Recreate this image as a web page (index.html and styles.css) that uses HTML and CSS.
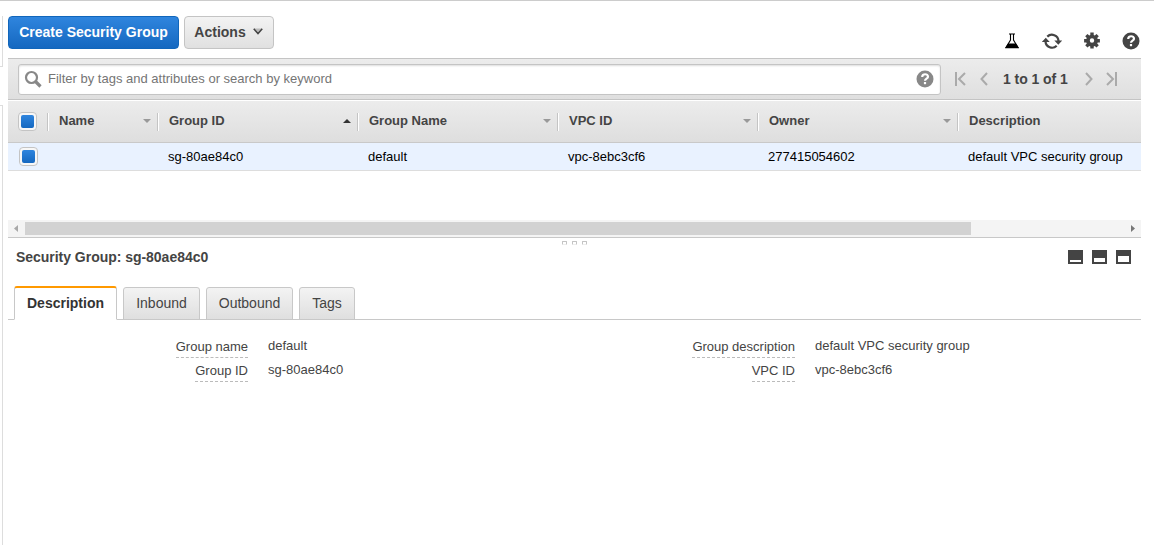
FILE: index.html
```html
<!DOCTYPE html>
<html lang="en">
<head>
<meta charset="utf-8">
<title>Security Groups</title>
<link rel="stylesheet" href="styles.css">
</head>
<body>
<div class="app">
  <aside class="rail"><div class="rail-top"></div><div class="rail-main"></div></aside>
  <main class="content">
    <header class="actions">
      <button class="btn primary">Create Security Group</button>
      <button class="btn menu">Actions
        <svg width="10" height="7" viewBox="0 0 10 7"><path d="M2 .5h6L5 4z" fill="#bbb"/><path d="M.8 .7l4.200 4.800L9.200 .7" fill="none" stroke="#444" stroke-width="1.700"/></svg>
      </button>
      <div class="tools">
        <svg width="16" height="18" viewBox="0 0 16 18"><path d="M5 2h6M6.500 2.500v5.500L2 15.500h12L9.500 8V2.500" fill="none" stroke="#000" stroke-width="1.1"/><path d="M4 11.500h8l3 4.700H1z" fill="#000"/></svg>
        <svg width="20" height="18" viewBox="0 0 20 18"><g fill="none" stroke="#444" stroke-width="2.200"><path d="M5.300 4.600A6.600 6.600 0 0 1 16.500 9"/><path d="M14.700 13.800A6.600 6.600 0 0 1 3.500 9.400"/></g><path d="M12.300 8.500H20.200l-3.900 4.200zM-.2 9.900h7.900L3.800 5.700z" fill="#444"/></svg>
        <svg width="16" height="18" viewBox="0 0 16 18"><path d="M6.300.6h3.400v2.400l1.100.5L12.500 1.900l2.300 2.300-1.600 1.700.5 1.100H15.900v3.400h-2.200l-.5 1.100 1.600 1.700-2.300 2.300-1.700-1.600-1.100.5V16.400H6.300v-2l-1.100-.5-1.700 1.600-2.300-2.300L2.800 11.500l-.5-1.100H.1V7h2.200l.5-1.100L1.200 4.200l2.300-2.300 1.700 1.600 1.100-.5zM8 6.300a2.200 2.200 0 1 0 0 4.400 2.200 2.200 0 0 0 0-4.400z" fill="#444" fill-rule="evenodd"/></svg>
        <svg width="18" height="18" viewBox="0 0 18 18"><circle cx="9" cy="9" r="8.500" fill="#444"/><path d="M6.200 7C6.200 3.200 12 3.500 12 6.700 12 8.800 9 8.600 9 10.800" fill="none" stroke="#fff" stroke-width="2.200"/><path d="M7.900 12h2.200v2.200H7.900z" fill="#fff"/></svg>
      </div>
    </header>
    <div class="filter">
      <div class="search">
        <svg width="18" height="18" viewBox="0 0 18 18"><circle cx="7.500" cy="7.500" r="5.500" fill="none" stroke="#888" stroke-width="2.200"/><path d="M11.500 11.500l5 5" stroke="#888" stroke-width="3.200"/></svg>
        <span>Filter by tags and attributes or search by keyword</span>
        <svg class="help" width="18" height="18" viewBox="0 0 18 18"><circle cx="9" cy="9" r="8.500" fill="#888"/><path d="M6.200 7C6.200 3.200 12 3.500 12 6.700 12 8.800 9 8.600 9 10.800" fill="none" stroke="#fff" stroke-width="2.200"/><path d="M7.900 12h2.200v2.200H7.900z" fill="#fff"/></svg>
      </div>
      <div class="pager">
        <svg width="11" height="14" viewBox="0 0 11 14"><path d="M1 0v14M10 1L4 7l6 6"/></svg>
        <svg class="prev" width="8" height="14" viewBox="0 0 8 14"><path d="M7 1L1.500 7 7 13"/></svg>
        <b>1 to 1 of 1</b>
        <svg class="next" width="8" height="14" viewBox="0 0 8 14"><path d="M1 1l5.500 6L1 13"/></svg>
        <svg class="last" width="11" height="14" viewBox="0 0 11 14"><path d="M10 0v14M1 1l6 6-6 6"/></svg>
      </div>
    </div>
    <div class="row head">
      <div class="pick"><i class="check"></i></div>
      <div class="cell"><span>Name</span><i class="arrow"></i></div>
      <div class="cell"><span>Group ID</span><i class="arrow up"></i></div>
      <div class="cell"><span>Group Name</span><i class="arrow"></i></div>
      <div class="cell"><span>VPC ID</span><i class="arrow"></i></div>
      <div class="cell"><span>Owner</span><i class="arrow"></i></div>
      <div class="cell"><span>Description</span></div>
    </div>
    <div class="row data">
      <div class="pick"><i class="check"></i></div>
      <div class="cell"></div>
      <div class="cell">sg-80ae84c0</div>
      <div class="cell">default</div>
      <div class="cell">vpc-8ebc3cf6</div>
      <div class="cell">277415054602</div>
      <div class="cell">default VPC security group</div>
    </div>
    <div class="scroll">
      <svg width="17" height="17" viewBox="0 0 17 17"><path d="M10 5v7L6 8.500z" fill="#a8a8a8"/></svg>
      <div class="thumb"></div>
      <svg class="right" width="17" height="17" viewBox="0 0 17 17"><path d="M7 5v7l4-3.500z" fill="#777"/></svg>
    </div>
    <div class="grip"><i></i><i></i><i></i></div>
    <div class="detail-head">
      <h2>Security Group: sg-80ae84c0</h2>
      <div class="panes"><i class="low"></i><i class="mid"></i><i class="high"></i></div>
    </div>
    <nav class="tabs">
      <a class="tab active">Description</a><a class="tab inbound">Inbound</a><a class="tab outbound">Outbound</a><a class="tab tags">Tags</a>
    </nav>
    <section class="details">
      <dl>
        <dt><span>Group name</span></dt><dd>default</dd>
        <dt><span>Group ID</span></dt><dd>sg-80ae84c0</dd>
      </dl>
      <dl class="second">
        <dt><span>Group description</span></dt><dd>default VPC security group</dd>
        <dt><span>VPC ID</span></dt><dd>vpc-8ebc3cf6</dd>
      </dl>
    </section>
  </main>
</div>
</body>
</html>
```
FILE: styles.css
```css
* { box-sizing: border-box; }
body { margin: 0; background: #fff; color: #444; font: 13px/16px "Liberation Sans", Arial, sans-serif; overflow: hidden; white-space: nowrap; }
svg { display: block; flex: none; }
.app { height: 545px; border-top: 1px solid #ccc; display: flex; }
.rail { width: 3px; margin-right: 5px; padding-top: 15px; display: flex; flex-direction: column; }
.rail-top { height: 51px; border: solid #ddd; border-width: 0 1px 1px 0; }
.rail-main { flex: 1; margin-top: 38px; border: solid #ddd; border-width: 1px 1px 0 0; }
.content { width: 1133px; display: flex; flex-direction: column; }
.actions { height: 57px; padding-top: 15px; display: flex; align-items: flex-start; gap: 5px; }
.btn { height: 33px; padding: 0 0 1px; border: 1px solid #c4c4c4; border-radius: 4px; font: bold 14px "Liberation Sans", Arial, sans-serif; display: flex; align-items: center; justify-content: center; }
.primary { width: 171px; color: #fff; border-color: #1166bb; background: linear-gradient(#2f85de, #1568c0); }
.menu { width: 90px; gap: 7px; padding-right: 1px; color: #444; background: linear-gradient(#f3f3f3, #e0e0e0); }
.menu svg { margin-top: -1px; }
.tools { margin: 16px 0 0 auto; display: flex; align-items: center; }
.tools svg:nth-child(2) { margin-left: 22px; }
.tools svg:nth-child(3) { margin-left: 22px; }
.tools svg:nth-child(4) { margin: 0 1px 0 22px; }
.filter { height: 42px; border: solid #c4c4c4; border-width: 1px 0; background: linear-gradient(#ececec, #dfdfdf); display: flex; align-items: center; padding-left: 10px; }
.search { width: 923px; height: 31px; border: 1px solid #c4c4c4; border-radius: 3px; background: #fff; box-shadow: inset 0 1px 2px #ddd; display: flex; align-items: center; padding: 0 6px 0 5px; color: #757575; }
.search span { margin-left: 6px; }
.search .help { margin-left: auto; }
.pager { display: flex; align-items: center; margin-left: 14px; }
.pager path { fill: none; stroke: #aaa; stroke-width: 2; }
.prev { margin-left: 14px; }
.pager b { width: 66px; margin-left: 15px; font-size: 14px; letter-spacing: -.05px; }
.next { margin-left: 16px; }
.last { margin-left: 13px; }
.row { display: grid; grid-template-columns: 39px 121px 200px 200px 200px 200px 173px; align-items: center; }
.head { height: 43px; grid-template-columns: 39px 110px 200px 200px 200px 200px 184px; border: solid #c9c9c9; border-top-color: #fff; border-width: 1px 0; background: linear-gradient(#ececec, #dedede); font-weight: bold; }
.pick { padding-left: 10px; }
.check { display: flex; align-items: center; justify-content: center; width: 19px; height: 19px; border: 1px solid #c4c4c4; border-radius: 4px; background: #f7f7f7; }
.check::before { content: ""; width: 13px; height: 13px; border-radius: 2px; background: linear-gradient(#2f85de, #1568c0); }
.head .cell { height: 18px; border-left: 1px solid #c4c4c4; box-shadow: inset 1px 0 #fff; padding: 0 6px 0 11px; display: flex; align-items: center; justify-content: space-between; }
.head .cell span { padding-bottom: 2px; }
.arrow { width: 8px; height: 4px; margin-top: -1px; background: #999; clip-path: polygon(0 0, 100% 0, 50% 100%); }
.arrow.up { background: #333; clip-path: polygon(50% 0, 100% 100%, 0 100%); }
.data { height: 28px; background: #e9f2ff; border-bottom: 1px solid #ddd; color: #000; }
.data .pick { padding-left: 11px; }
.scroll { height: 18px; margin-top: 49px; background: #f4f4f4; border-bottom: 1px solid #c8c8c8; display: flex; }
.thumb { width: 946px; height: 13px; margin-top: 2px; background: #d2d2d2; }
.scroll .right { margin-left: auto; }
.grip { height: 10px; padding-top: 3px; display: flex; gap: 5px; justify-content: center; }
.grip i { width: 5px; height: 4px; border: 1px solid #c4c4c4; border-bottom-color: #eee; border-radius: 1px; }
.detail-head { height: 38px; padding: 2px 10px 0 8px; display: flex; justify-content: space-between; }
h2 { margin: -1px 0 0; font-size: 14px; line-height: 16px; letter-spacing: -.03px; }
.panes { display: flex; gap: 9px; }
.panes i { width: 15px; height: 14px; border: 2px solid #444; border-top-width: 10px; }
.panes .mid { border-top-width: 8px; }
.panes .high { border-top-width: 6px; }
.tabs { height: 34px; border-bottom: 1px solid #c8c8c8; padding-left: 6px; display: flex; align-items: flex-end; gap: 6px; font-size: 14px; }
.tab { height: 33px; border: 1px solid #c8c8c8; border-radius: 3px 3px 0 0; margin-bottom: -1px; padding-bottom: 2px; display: flex; align-items: center; justify-content: center; background: linear-gradient(#f3f3f3, #dfdfdf); }
.active { width: 103px; height: 34px; border-top: 2px solid #f90; border-bottom-color: #fff; background: #fff; font-weight: bold; color: #333; }
.inbound { width: 77px; }
.outbound { width: 87px; }
.tags { width: 56px; }
.details { display: flex; padding-top: 18px; }
dl { margin: 0; width: 520px; display: grid; grid-template-columns: 240px auto; grid-auto-rows: 24px; column-gap: 20px; }
.second { grid-template-columns: 267px auto; }
dt { text-align: right; }
dt span { display: inline-block; height: 20px; line-height: 17px; border-bottom: 1px dashed #bbb; }
dd { margin: 0; }
```
